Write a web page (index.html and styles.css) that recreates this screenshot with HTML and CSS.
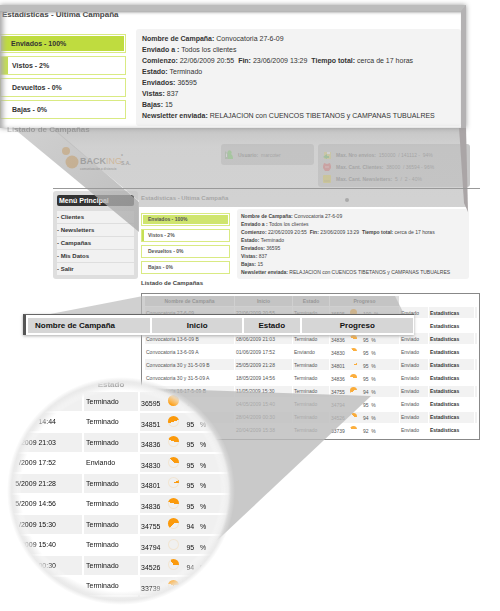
FILE: index.html
```html
<!DOCTYPE html>
<html lang="es">
<head>
<meta charset="utf-8">
<title>Estadísticas de campaña</title>
<link rel="stylesheet" href="styles.css">
</head>
<body>
<div class="stage">
<div class="page">
  <header class="top">
    <svg class="logo" viewBox="0 0 72 34" role="img" aria-label="Backing S.A.">
      <circle cx="5" cy="7" r="4"/><circle cx="11" cy="18" r="6.5"/>
      <text x="19" y="20" class="logo-name">BACK<tspan class="logo-accent">ING</tspan></text>
      <text x="60" y="21" class="logo-sub">S.A.</text>
      <text x="60" y="14" class="logo-sub">*</text>
      <text x="19" y="26" class="logo-tag">comunicación a distancia</text>
    </svg>
    <div class="box user">
      <svg viewBox="0 0 10 10" class="ico"><path d="M4 1a2 2 0 0 1 3 3q2 1 2 5H2V6z" fill="#4fcf35"/><path d="M1 1l3 3v5H1z" fill="#7fa377"/><path d="M2 3l1 1v3H2z" fill="#fff"/></svg>
      <span><b>Usuario:</b> &nbsp;marcoter</span>
    </div>
    <div class="box quotas">
      <div><svg viewBox="0 0 10 10" class="ico"><rect x="2" y="2" width="7" height="7" fill="#e1cf4a"/><path d="M1 7l4-3v2h2v2H5v1z" fill="#3fb334"/><path d="M5 2h3v2H5z" fill="#fff"/></svg><span><b>Max. Nro envios:</b> &nbsp;150000 &nbsp;/ 141112 - &nbsp;94%</span></div>
      <div><svg viewBox="0 0 10 10" class="ico"><path d="M1 4l1-3 3 1 3-1 1 3v2L7 9H3L1 6z" fill="#e03c3c"/><path d="M3 5h4" stroke="#f5b0b0"/></svg><span><b>Max. Cant. Clientes:</b> &nbsp;38000 &nbsp;/ 36594 - 96%</span></div>
      <div><svg viewBox="0 0 10 10" class="ico"><rect x="1" y="1" width="8" height="8" rx="1" fill="#e0c81a"/><path d="M2 7h6" stroke="#a8951b"/></svg><span><b>Max. Cant. Newsletters:</b> &nbsp;5 &nbsp;/ &nbsp;2 - 40%</span></div>
    </div>
  </header>
  <div class="columns">
    <nav class="menu">
      <h2>Menú Principal</h2>
      <a href="#">- Clientes</a><a href="#">- Newsletters</a><a href="#">- Campañas</a><a href="#">- Mis Datos</a><a href="#">- Salir</a>
    </nav>
    <main>
      <h3>Estadísticas - Ultima Campaña</h3>
      <div class="summary">
        <div class="bars">
          <div class="bar full">Enviados - 100%</div><div class="bar low">Vistos - 2%</div><div class="bar">Devueltos - 0%</div><div class="bar">Bajas - 0%</div>
        </div>
        <div class="details">
          <p><b>Nombre de Campaña:</b> Convocatoria 27-6-09</p>
          <p><b>Enviado a :</b> Todos los clientes</p>
          <p><b>Comienzo:</b> 22/06/2009 20:55 &nbsp;<b>Fin:</b> 23/06/2009 13:29 &nbsp;<b>Tiempo total:</b> cerca de 17 horas</p>
          <p><b>Estado:</b> Terminado</p>
          <p><b>Enviados:</b> 36595</p>
          <p><b>Vistas:</b> 837</p>
          <p><b>Bajas:</b> 15</p>
          <p><b>Newsletter enviada:</b> RELAJACION con CUENCOS TIBETANOS y CAMPANAS TUBUALRES</p>
        </div>
      </div>
      <h3 class="list-title">Listado de Campañas</h3>
      <div class="frame">
      <table class="list">
        <colgroup><col class="c-name"><col class="c-start"><col class="c-state"><col class="c-prog"><col class="c-sent"><col class="c-stat"><col class="c-end"><col></colgroup>
        <thead><tr><th>Nombre de Campaña</th><th>Inicio</th><th>Estado</th><th>Progreso</th></tr></thead>
        <tbody>
        <tr><td>Convocatoria 27-6-09</td><td>22/06/2009 20:55</td><td>Terminado</td><td class="prog">36595<i class="pie p1"></i>100 &nbsp;%</td><td>Enviado</td><td><a href="#">Estadísticas</a></td><td></td><td></td></tr>
        <tr><td></td><td></td><td></td><td></td><td></td><td><a href="#">Estadísticas</a></td><td></td><td></td></tr>
        <tr><td>Convocatoria 13-6-09 B</td><td>08/06/2009 21:03</td><td>Terminado</td><td class="prog">34836<i class="pie p3"></i>95 &nbsp;%</td><td>Enviado</td><td><a href="#">Estadísticas</a></td><td></td><td></td></tr>
        <tr><td>Convocatoria 13-6-09 A</td><td>01/06/2009 17:52</td><td>Enviando</td><td class="prog">34830<i class="pie p4"></i>95 &nbsp;%</td><td>Enviado</td><td><a href="#">Estadísticas</a></td><td></td><td></td></tr>
        <tr><td>Convocatoria 30 y 31-5-09 B</td><td>25/05/2009 21:28</td><td>Terminado</td><td class="prog">34801<i class="pie p5"></i>95 &nbsp;%</td><td>Enviado</td><td><a href="#">Estadísticas</a></td><td></td><td></td></tr>
        <tr><td>Convocatoria 30 y 31-5-09 A</td><td>18/05/2009 14:56</td><td>Terminado</td><td class="prog">34836<i class="pie p6"></i>95 &nbsp;%</td><td>Enviado</td><td><a href="#">Estadísticas</a></td><td></td><td></td></tr>
        <tr><td>Convocatoria 16-17-5-09 B</td><td>11/05/2009 15:30</td><td>Terminado</td><td class="prog">34755<i class="pie p7"></i>94 &nbsp;%</td><td>Enviado</td><td><a href="#">Estadísticas</a></td><td></td><td></td></tr>
        <tr><td></td><td>04/05/2009 15:40</td><td>Terminado</td><td class="prog">34794<i class="pie p8"></i>95 &nbsp;%</td><td>Enviado</td><td><a href="#">Estadísticas</a></td><td></td><td></td></tr>
        <tr><td></td><td>28/04/2009 00:30</td><td>Terminado</td><td class="prog">34526<i class="pie p9"></i>94 &nbsp;%</td><td>Enviado</td><td><a href="#">Estadísticas</a></td><td></td><td></td></tr>
        <tr><td></td><td>20/04/2009 15:38</td><td>Terminado</td><td class="prog">33739<i class="pie p10"></i>92 &nbsp;%</td><td>Enviado</td><td><a href="#">Estadísticas</a></td><td></td><td></td></tr>
        </tbody>
      </table>
      </div>
    </main>
  </div>
</div>

<svg class="beams" viewBox="0 0 500 611" width="500" height="611" aria-hidden="true">
  <defs>
    <linearGradient id="fall" x1="0" y1="0" x2="0" y2="1"><stop offset="0" stop-color="#b4b4b4"/><stop offset=".25" stop-color="#c2c2c2"/><stop offset="1" stop-color="#c4c4c4"/></linearGradient>
    <linearGradient id="edge" x1="0" y1="0" x2="1" y2="1"><stop offset="0" stop-color="#c4c4c4"/><stop offset="1" stop-color="#aaa"/></linearGradient>
  </defs>
  <path d="M50 127H460L466 207H139L139 201Z" fill="url(#fall)" opacity=".76"/>
  <path d="M12 127H52L139 202V232Z" fill="url(#edge)" opacity=".78"/>
  <path d="M459 127H466L468 212L464 203Z" fill="#aaa5a6"/>
  <path d="M53 188.500H480" stroke="#999" stroke-width="1"/>
  <circle cx="347" cy="200" r="2" fill="#aaa"/>
  <path d="M40 316L143 296H395L405 316Z" fill="#b8b8b8" opacity=".66"/>
  <path d="M140 388L371 396L208 549Z" fill="#bcbcbc" opacity=".8"/>
</svg>

<section class="callout">
  <h3>Estadísticas - Ultima Campaña</h3>
  <div class="summary">
    <div class="bars">
      <div class="bar full">Enviados - 100%</div><div class="bar low">Vistos - 2%</div><div class="bar">Devueltos - 0%</div><div class="bar">Bajas - 0%</div>
    </div>
    <div class="details">
      <p><b>Nombre de Campaña:</b> Convocatoria 27-6-09</p>
      <p><b>Enviado a :</b> Todos los clientes</p>
      <p><b>Comienzo:</b> 22/06/2009 20:55 &nbsp;<b>Fin:</b> 23/06/2009 13:29 &nbsp;<b>Tiempo total:</b> cerca de 17 horas</p>
      <p><b>Estado:</b> Terminado</p>
      <p><b>Enviados:</b> 36595</p>
      <p><b>Vistas:</b> 837</p>
      <p><b>Bajas:</b> 15</p>
      <p><b>Newsletter enviada:</b> RELAJACION con CUENCOS TIBETANOS y CAMPANAS TUBUALRES</p>
    </div>
  </div>
  <h3 class="cut">Listado de Campañas</h3>
</section>

<div class="strip"><span>Nombre de Campaña</span><span>Inicio</span><span>Estado</span><span>Progreso</span></div>

<div class="lens">
  <div class="glass">
  <table class="zoomed">
    <colgroup><col class="z-start"><col class="z-state"><col></colgroup>
    <thead><tr><th></th><th>Estado</th><th></th></tr></thead>
    <tbody>
    <tr><td></td><td>Terminado</td><td class="prog">36595<i class="pie p1"></i><span class="ghost">100</span></td></tr>
    <tr><td>14:44</td><td>Terminado</td><td class="prog">34851<i class="pie p2"></i>95 &nbsp;&nbsp;%</td></tr>
    <tr><td>2009 21:03</td><td>Terminado</td><td class="prog">34836<i class="pie p3"></i>95 &nbsp;&nbsp;%</td></tr>
    <tr><td>/2009 17:52</td><td>Enviando</td><td class="prog">34830<i class="pie p4"></i>95 &nbsp;&nbsp;%</td></tr>
    <tr><td>5/2009 21:28</td><td>Terminado</td><td class="prog">34801<i class="pie p5"></i>95 &nbsp;&nbsp;%</td></tr>
    <tr><td>5/2009 14:56</td><td>Terminado</td><td class="prog">34836<i class="pie p6"></i>95 &nbsp;&nbsp;%</td></tr>
    <tr><td>/2009 15:30</td><td>Terminado</td><td class="prog">34755<i class="pie p7"></i>94 &nbsp;&nbsp;%</td></tr>
    <tr><td>2009 15:40</td><td>Terminado</td><td class="prog">34794<i class="pie p8"></i>95 &nbsp;&nbsp;%</td></tr>
    <tr><td>00:30</td><td>Terminado</td><td class="prog">34526<i class="pie p9"></i>94 &nbsp;&nbsp;%</td></tr>
    <tr><td></td><td>Terminado</td><td class="prog">33739<i class="pie p10"></i></td></tr>
    </tbody>
  </table>
  </div>
</div>
</div>
</body>
</html>
```
FILE: styles.css
```css
* { box-sizing: border-box; }
body {
  margin: 0;
  background: #fff;
  color: #444;
  font-family: "Liberation Sans", Arial, sans-serif;
  font-size: 6px;
}
h2, h3, p { margin: 0; }
a { color: inherit; text-decoration: none; }
.stage { position: relative; min-height: 611px; overflow: hidden; }

/* Application page */
.page { padding: 144px 20px 0 53px; }
.top { display: flex; gap: 4px; height: 44px; padding-right: 10px; align-items: flex-start; }
.logo { width: 72px; height: 34px; margin: 0 auto 0 8px; }
.logo circle { fill: #f09010; }
.logo text { font-weight: bold; fill: #444; }
.logo-name { font-size: 9px; }
.logo .logo-accent { fill: #f09010; font-weight: normal; }
.logo .logo-sub { font-size: 5px; }
.logo .logo-tag { font-size: 3px; }
.box { border-radius: 3px; background: #c6c6c6; color: #444; white-space: nowrap; font-size: 5px; }
.ico { width: 10px; height: 10px; flex: none; }
.user { display: flex; align-items: center; gap: 4px; width: 93px; height: 21px; padding-left: 3px; }
.quotas { width: 152px; height: 43px; padding: 5px 4px; }
.quotas div { display: flex; align-items: center; gap: 4px; height: 12px; }
.columns { display: flex; gap: 3px; padding-top: 3px; }
.menu {
  width: 85px;
  height: 88px;
  flex: none;
  padding: 4px;
  background: #dedede;
  border-radius: 3px;
  color: #333;
  font-weight: bold;
}
.menu h2 {
  margin-bottom: 5px;
  padding-left: 2px;
  background: #333;
  border-radius: 2px;
  color: #fff;
  font-size: 7px;
  line-height: 11px;
}
.menu a { display: block; height: 12px; margin-bottom: 1px; background: #f1f1f1; line-height: 12px; }
main { flex: 1; min-width: 0; }
main h3 { font-size: 6px; line-height: 14px; color: #444; }
.summary { display: flex; }
main .summary { gap: 7px; padding: 4px 11px 0 0; }
main .bars { width: 89px; flex: none; padding-top: 4px; }
.bar {
  background: #fff;
  border: 1px solid #d9ea83;
  color: #555;
  font-weight: bold;
}
main .bar { height: 13px; margin-bottom: 3px; padding-left: 6px; line-height: 11px; font-size: 5px; }
.bar.full { background: #bfdc3f; box-shadow: inset 0 0 0 1px #fff; }
main .bar.full { background: #cfe56e; }
.bar.low { background: linear-gradient(90deg, #c5df55 2px, #fff 2px); }
.details { flex: 1; min-width: 0; background: #f3f3f3; border-radius: 3px; white-space: nowrap; color: #333; }
main .details { padding: 3px 4px; line-height: 8px; height: 70px; font-size: 5px; color: #444; }
main .list-title { line-height: 8px; margin-bottom: 6px; }
.frame { border: 1px solid #888; padding: 2px 4px 2px 2px; height: 147px; }
table { border-collapse: separate; table-layout: fixed; width: 100%; }
.list { border-spacing: 1px 0; font-size: 5px; height: 141px; white-space: nowrap; color: #555; }
.c-name { width: 89px; }
.c-start { width: 57px; }
.c-state { width: 36px; }
.c-prog { width: 69px; }
.c-sent { width: 28px; }
.c-stat { width: 45px; }
.c-end { width: 2px; }
td, th { padding: 0; }
.list th { background: #ddd; height: 10px; }
.list td { padding-left: 1px; height: 13px; border-top: 1px solid #fff; border-bottom: 1px solid #fff; }
.list tr:nth-child(odd) td { background: #f2f2f2; }
.list a { font-weight: bold; color: #333; }
.pie { display: inline-block; border-radius: 50%; background: conic-gradient(from var(--from), #fb9a0c var(--sweep), transparent 0); }
.list .pie { width: 7px; height: 7px; margin: 0 6px 0 5px; opacity: .8; }
.p1 { --from: 90deg; --sweep: 352deg; }
.p2 { --from: 250deg; --sweep: 185deg; }
.p3 { --from: 295deg; --sweep: 160deg; }
.p4 { --from: 315deg; --sweep: 135deg; }
.p5 { --from: 65deg; --sweep: 30deg; }
.p6 { --from: 285deg; --sweep: 175deg; }
.p7 { --from: 225deg; --sweep: 220deg; }
.p8 { --from: 0deg; --sweep: 0deg; }
.p9 { --from: 325deg; --sweep: 130deg; }
.p10 { --from: 290deg; --sweep: 150deg; }

/* Enlarged views laid over the page */
.beams, .callout, .strip, .lens { position: absolute; }
.beams { top: 0; left: 0; }
.callout {
  top: 5px;
  left: 0;
  right: 34px;
  height: 123px;
  border-top: 6px solid #bcbcbc;
  border-right: 5px solid #b4b2b3;
  background: #fff;
  box-shadow: 0 0 5px #999;
  font-size: 7px;
}
.callout::after {
  content: "";
  position: absolute;
  inset: 0;
  box-shadow: inset 4px 0 5px -1px #aaa, inset 0 3px 3px -2px #999;
}
.callout h3 { padding-left: 2px; font-size: 8px; line-height: 8px; color: #444; }
.callout .summary { padding-top: 10px; gap: 10px; }
.callout .bars { width: 126px; flex: none; padding-top: 5px; }
.callout .bar { height: 19px; margin-bottom: 3px; padding-left: 11px; line-height: 17px; color: #333; }
.callout .bar.full { border-width: 1px 1px 1px 0; }
.callout .bar.low { background: linear-gradient(90deg, #c5df55 7px, #fff 7px); }
.callout .details { height: 97px; padding: 4px 6px; line-height: 11px; }
.callout h3.cut { padding-left: 7px; opacity: .3; }
.strip {
  top: 314px;
  left: 23px;
  right: 86px;
  display: grid;
  grid-template-columns: 123fr 90fr 56fr 112fr;
  gap: 2px;
  padding: 3px 1px 2px 2px;
  background: #fff;
  border-left: 3px solid #555;
  border-top: 1px solid #666;
  box-shadow: 0 1px 3px #aaa;
}
.strip span { background: #d6d6d6; color: #111; font-size: 8px; font-weight: bold; line-height: 15px; text-align: center; }
.strip span:first-child { text-align: left; padding-left: 7px; }
.lens {
  top: 377px;
  left: 7px;
  width: 228px;
  height: 228px;
  border-radius: 50%;
  background: radial-gradient(circle closest-side, #fff 88%, #ececec 94%, rgba(225, 225, 225, .7) 96%, transparent 100%);
}
.glass {
  height: 228px;
  border-radius: 50%;
  overflow: hidden;
  mask-image: radial-gradient(circle closest-side, #000 87%, transparent 97%);
}
.zoomed { border-spacing: 2px 0; font-size: 7px; color: #111; white-space: nowrap; height: 220px; }
.z-start { width: 73px; }
.z-state { width: 54px; }
.zoomed th { height: 15px; font-size: 8px; color: #555; }
.zoomed td { padding: 0 2px; border-bottom: 2px solid #fff; }
.zoomed td:first-child { text-align: right; padding-right: 26px; }
.zoomed td.prog { padding-left: 1px; }
.zoomed tr:nth-child(odd) td, .zoomed td.prog { background: #f0f0f0; }
.zoomed .pie { width: 11px; height: 11px; margin: 0 7px 0 8px; box-shadow: inset 0 0 0 1px rgba(251, 154, 12, .12); }
.ghost { opacity: .2; }
```
